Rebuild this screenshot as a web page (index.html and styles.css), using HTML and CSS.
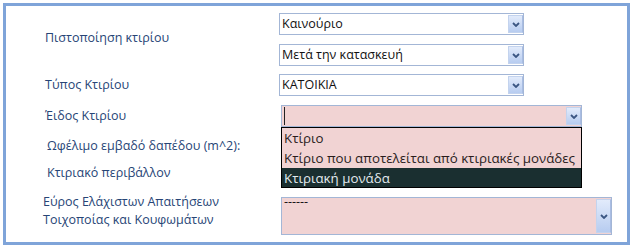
FILE: index.html
```html
<!DOCTYPE html>
<html lang="el">
<head>
<meta charset="utf-8">
<title>Κτίριο</title>
<link rel="stylesheet" href="styles.css">
</head>
<body>
<div class="frame">
  <div class="row row-cert">
    <div class="label">Πιστοποίηση κτιρίου</div>
    <div class="stack">
      <div class="combo"><span class="value">Καινούριο</span><span class="btn"><svg viewBox="0 0 8 5" width="8" height="5"><path d="M1 1 L4 4 L7 1" fill="none" stroke="#3b5682" stroke-width="1.8"/></svg></span></div>
      <div class="combo"><span class="value">Μετά την κατασκευή</span><span class="btn"><svg viewBox="0 0 8 5" width="8" height="5"><path d="M1 1 L4 4 L7 1" fill="none" stroke="#3b5682" stroke-width="1.8"/></svg></span></div>
    </div>
  </div>
  <div class="row row-type">
    <div class="label">Τύπος Κτιρίου</div>
    <div class="combo"><span class="value">ΚΑΤΟΙΚΙΑ</span><span class="btn"><svg viewBox="0 0 8 5" width="8" height="5"><path d="M1 1 L4 4 L7 1" fill="none" stroke="#3b5682" stroke-width="1.8"/></svg></span></div>
  </div>
  <div class="row row-kind">
    <div class="label">Έιδος Κτιρίου</div>
    <div class="combo combo-wide combo-pink">
      <span class="caret"></span>
      <span class="btn"><svg viewBox="0 0 8 5" width="8" height="5"><path d="M1 1 L4 4 L7 1" fill="none" stroke="#3b5682" stroke-width="1.8"/></svg></span>
      <ul class="list">
        <li>Κτίριο</li>
        <li>Κτίριο που αποτελείται από κτιριακές μονάδες</li>
        <li class="selected">Κτιριακή μονάδα</li>
      </ul>
    </div>
  </div>
  <div class="row row-area">
    <div class="label label-in">Ωφέλιμο εμβαδό δαπέδου (m^2):</div>
    <div class="field"></div>
  </div>
  <div class="row row-env">
    <div class="label label-in">Κτιριακό περιβάλλον</div>
    <div class="field"></div>
  </div>
  <div class="row row-req">
    <div class="label label-out">Εύρος Ελάχιστων Απαιτήσεων<br>Τοιχοποίας και Κουφωμάτων</div>
    <div class="combo combo-tall combo-pink"><span class="value value-top">------</span><span class="btn"><svg viewBox="0 0 8 5" width="8" height="5"><path d="M1 1 L4 4 L7 1" fill="none" stroke="#3b5682" stroke-width="1.8"/></svg></span></div>
  </div>
</div>
</body>
</html>
```

FILE: styles.css
```css
* { box-sizing: border-box; }
html, body { margin: 0; padding: 0; background: #ffffff; }
body {
  font-family: "Open Sans", "Noto Sans", sans-serif;
  font-size: 12.5px;
}
.frame {
  margin: 3px;
  width: 627px;
  height: 242px;
  border: 3px solid #7fa4d9;
  padding: 7px 0 0 39px;
  display: flex;
  flex-direction: column;
}
.row {
  display: flex;
  align-items: center;
}
.label {
  width: 234px;
  flex: none;
  color: #274576;
  line-height: 18px;
}
.label-in { padding-left: 2px; }
.label-out { padding-left: 0; margin-left: -2px; width: 236px; align-self: flex-start; margin-top: -4px; }
.row-cert .label { margin-top: -3px; }
.stack { display: flex; flex-direction: column; gap: 9px; }
.row-type { margin-top: 8px; }
.row-kind { margin-top: 9px; position: relative; z-index: 2; }
.row-area { margin-top: 8px; }
.row-env { margin-top: 5px; }
.row-req { margin-top: 13px; }
.combo {
  position: relative;
  width: 245px;
  height: 22px;
  border: 1px solid #a3b6d6;
  background: #ffffff;
  color: #111111;
  display: flex;
  align-items: center;
  padding-left: 2px;
}
.combo-wide { width: 301px; margin-left: 2px; }
.combo-tall { width: 331px; height: 38px; margin-left: 2px; align-items: flex-start; }
.combo-pink { background: #f1d3d3; }
.value { line-height: 18px; white-space: nowrap; }
.value-top { line-height: 12px; margin-top: -2px; }
.caret {
  width: 1px;
  height: 18px;
  background: #222222;
}
.btn {
  position: absolute;
  right: 0;
  top: 1px;
  bottom: 1px;
  width: 15px;
  background: linear-gradient(#e2ebfb, #b7ccf0);
  border: 1px solid #c3d3ee;
  border-right-color: #a9bde3;
  display: flex;
  align-items: center;
  justify-content: center;
}
.list {
  position: absolute;
  left: -1px;
  top: 21px;
  width: 301px;
  margin: 0;
  padding: 0;
  list-style: none;
  border: 1px solid #000000;
  background: #f1d3d3;
  color: #2a1c1c;
  font-size: 13.3px;
}
.list li {
  height: 20px;
  line-height: 20px;
  padding-left: 2px;
  white-space: nowrap;
}
.list li.selected {
  height: 19px;
  background: #1a2f30;
  color: #e2eaee;
}
.field {
  width: 301px;
  height: 22px;
  margin-left: 2px;
}
```
